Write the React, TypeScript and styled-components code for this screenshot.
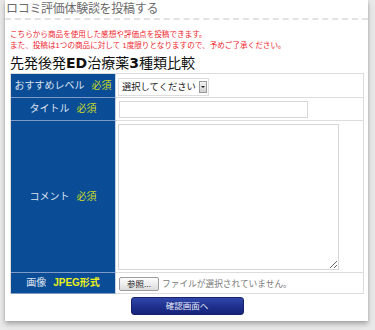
import React from 'react';
import styled, { createGlobalStyle } from 'styled-components';

const GlobalStyle = createGlobalStyle`
  html, body {
    margin: 0;
    padding: 0;
    background: #e9e9e9;
  }
  body {
    font-family: "Liberation Sans", "Noto Sans CJK JP", sans-serif;
  }
`;

const Page = styled.div`
  padding: 0 7px 10px 5px;
`;

const Card = styled.section`
  width: 363px;
  background: #fff;
  box-shadow: 0 3px 5px rgba(0, 0, 0, 0.28), 0 0 2px rgba(0, 0, 0, 0.12);
  padding-bottom: 6px;
`;

const CardHeader = styled.h2`
  margin: 0;
  height: 17px;
  padding: 1px 0 0 1px;
  border-bottom: 2px dashed #e2e2e2;
  font-size: 12px;
  line-height: 16px;
  font-weight: normal;
  color: #6a6a6a;
  letter-spacing: -0.3px;
`;

const CardBody = styled.div`
  padding: 0 4px 0 5px;
`;

const Notice = styled.p`
  margin: 9px 0 0 0;
  font-size: 7.6px;
  line-height: 11px;
  color: #f0262e;
`;

const ProductTitle = styled.h3`
  margin: 3px 0 1px 0;
  font-size: 14px;
  line-height: 18px;
  font-weight: normal;
  color: #111;
`;

const Latin = styled.b`
  font-family: "DejaVu Sans", "Liberation Sans", sans-serif;
  font-weight: bold;
`;

const FormTable = styled.div`
  display: grid;
  grid-template-columns: 105px 1fr;
  border: 1px solid #dcdcdc;
  border-bottom: none;
`;

const LabelCell = styled.div<{ $h: number }>`
  height: ${p => p.$h}px;
  background: #0b4c97;
  border-bottom: 1px solid #7d9bc6;
  border-right: 1px solid #c9d4e3;
  display: flex;
  align-items: center;
  justify-content: center;
  gap: 7px;
  font-size: 10px;
  line-height: 12px;
  color: #dce3ee;
`;

const Required = styled.span<{ $bright?: boolean }>`
  color: ${p => (p.$bright ? '#e9ef1a' : '#c7db24')};
  font-weight: ${p => (p.$bright ? 'bold' : 'normal')};
`;

const FieldCell = styled.div<{ $pt: number }>`
  border-bottom: 1px solid #dcdcdc;
  padding: ${p => p.$pt}px 0 0 2px;
  box-sizing: border-box;
`;

const SelectWrap = styled.div`
  display: inline-flex;
  align-items: center;
  width: 91px;
  height: 18px;
  box-sizing: border-box;
  border: 1px solid #dedede;
  padding: 0 1px 0 3px;
  background: #fff;
`;

const Select = styled.select`
  appearance: none;
  border: none;
  background: none;
  padding: 0;
  margin: 0;
  font-family: inherit;
  font-size: 9.3px;
  color: #222;
  flex: 1;
  outline: none;
`;

const SelectArrow = styled.span`
  width: 8px;
  height: 12px;
  box-sizing: border-box;
  border: 1px solid #9a9a9a;
  background: linear-gradient(#f2f2f2, #d2d2d2);
  display: flex;
  align-items: center;
  justify-content: center;
  &::after {
    content: '';
    border-left: 2px solid transparent;
    border-right: 2px solid transparent;
    border-top: 2px solid #222;
  }
`;

const TextInput = styled.input`
  display: block;
  width: 189px;
  height: 17px;
  box-sizing: border-box;
  border: 1px solid #d6d6d6;
  margin: 0 0 0 1px;
  padding: 0 3px;
  outline: none;
`;

const TextArea = styled.textarea`
  display: block;
  width: 221px;
  height: 146px;
  box-sizing: border-box;
  border: 1px solid #d6d6d6;
  margin: 0;
  padding: 2px;
  outline: none;
`;

const FileRow = styled.div`
  display: flex;
  align-items: center;
  gap: 3px;
  height: 17px;
  margin-left: 1px;
`;

const BrowseButton = styled.button`
  width: 40px;
  height: 14px;
  box-sizing: border-box;
  border: 1px solid #9c9c9c;
  border-radius: 2px;
  background: linear-gradient(#fdfdfd, #dcdcdc);
  padding: 0;
  font-family: inherit;
  font-size: 8.5px;
  line-height: 12px;
  color: #222;
`;

const FileStatus = styled.span`
  font-size: 8.7px;
  color: #7a7a7a;
`;

const Actions = styled.div`
  display: flex;
  justify-content: center;
  padding-top: 3px;
`;

const SubmitButton = styled.button`
  width: 113px;
  height: 18px;
  border: 1px solid #16226e;
  border-radius: 3px;
  background: linear-gradient(#3048aa, #1d2d8a 60%, #172579);
  color: #e8ecf8;
  font-family: inherit;
  font-size: 8.5px;
  line-height: 16px;
  padding: 0;
`;

export default function App() {
  return (
    <>
      <GlobalStyle />
      <Page>
        <Card>
          <CardHeader>ロコミ評価体験談を投稿する</CardHeader>
          <CardBody>
            <Notice>
              こちらから商品を使用した感想や評価点を投稿できます。
              <br />
              また、投稿は1つの商品に対して 1度限りとなりますので、予めご了承ください。
            </Notice>
            <ProductTitle>
              先発後発<Latin>ED</Latin>治療薬<Latin>3</Latin>種類比較
            </ProductTitle>
            <FormTable>
              <LabelCell $h={23}>
                <span>おすすめレベル</span>
                <Required>必須</Required>
              </LabelCell>
              <FieldCell $pt={2}>
                <SelectWrap>
                  <Select defaultValue="">
                    <option value="">選択してください</option>
                  </Select>
                  <SelectArrow />
                </SelectWrap>
              </FieldCell>

              <LabelCell $h={22}>
                <span>タイトル</span>
                <Required>必須</Required>
              </LabelCell>
              <FieldCell $pt={3}>
                <TextInput type="text" />
              </FieldCell>

              <LabelCell $h={151}>
                <span>コメント</span>
                <Required>必須</Required>
              </LabelCell>
              <FieldCell $pt={3}>
                <TextArea />
              </FieldCell>

              <LabelCell $h={20}>
                <span>画像</span>
                <Required $bright>JPEG形式</Required>
              </LabelCell>
              <FieldCell $pt={2}>
                <FileRow>
                  <BrowseButton type="button">参照...</BrowseButton>
                  <FileStatus>ファイルが選択されていません。</FileStatus>
                </FileRow>
              </FieldCell>
            </FormTable>
            <Actions>
              <SubmitButton type="button">確認画面へ</SubmitButton>
            </Actions>
          </CardBody>
        </Card>
      </Page>
    </>
  );
}
